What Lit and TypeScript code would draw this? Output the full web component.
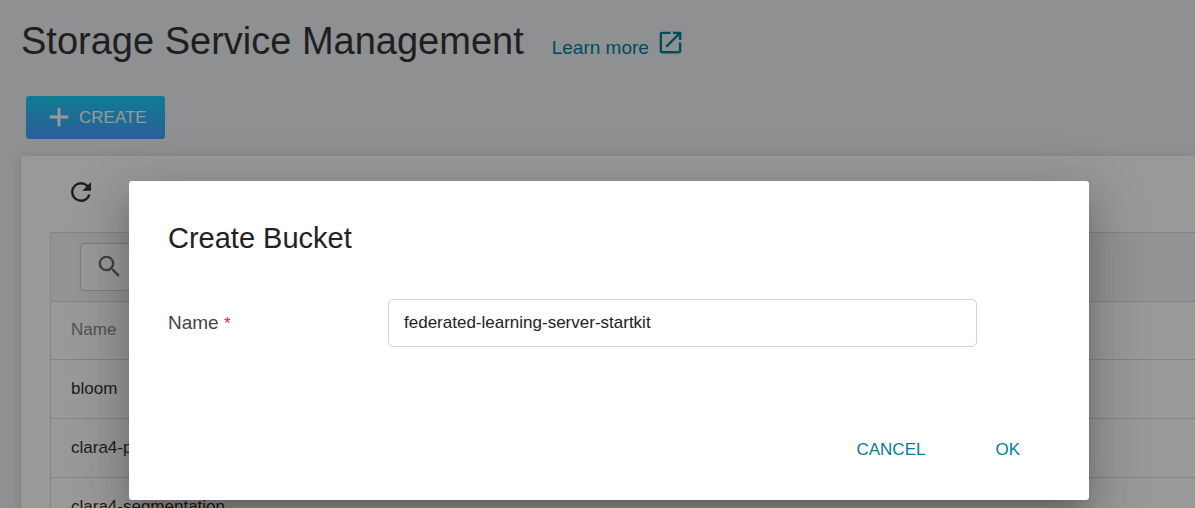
import { LitElement, html, css } from "lit";
import { customElement, property, state } from "lit/decorators.js";

@customElement("bucket-table")
class BucketTable extends LitElement {
  @property({ attribute: false }) buckets: string[] = [];

  static styles = css`
    :host {
      display: block;
    }
    .frame {
      border: 1px solid #dcdcdc;
      border-right: 0;
    }
    .filter {
      background: #f4f5f9;
      padding: 10px 29px;
      border-bottom: 1px solid #dcdcdc;
    }
    .search {
      display: flex;
      align-items: center;
      width: 360px;
      height: 48px;
      box-sizing: border-box;
      padding: 0 14px 2px;
      background: #fff;
      border: 1px solid #d0d0d0;
      border-radius: 4px;
    }
    .search svg {
      width: 29px;
      height: 29px;
      flex: none;
      fill: #6f6f6f;
    }
    .search input {
      flex: 1;
      min-width: 0;
      border: 0;
      outline: 0;
      background: none;
      font: inherit;
    }
    table {
      width: 100%;
      border-collapse: collapse;
      color: #333;
    }
    th,
    td {
      height: 59px;
      box-sizing: border-box;
      padding: 0 20px;
      text-align: left;
      font-weight: 400;
      border-bottom: 1px solid #dcdcdc;
    }
    th {
      height: 57px;
      color: #888;
    }
  `;

  render() {
    return html`
      <div class="frame">
        <div class="filter">
          <div class="search">
            <svg viewBox="0 0 24 24" aria-hidden="true">
              <path
                d="M15.5 14h-.79l-.28-.27A6.471 6.471 0 0 0 16 9.5 6.5 6.5 0 1 0 9.5 16c1.61 0 3.09-.59 4.23-1.57l.27.28v.79l5 4.99L20.49 19l-4.99-5zm-6 0C7.01 14 5 11.99 5 9.5S7.01 5 9.5 5 14 7.01 14 9.5 11.99 14 9.5 14z"
              />
            </svg>
            <input type="text" aria-label="Search buckets" />
          </div>
        </div>
        <table>
          <thead>
            <tr>
              <th scope="col">Name</th>
            </tr>
          </thead>
          <tbody>
            ${this.buckets.map((name) => html`<tr><td>${name}</td></tr>`)}
          </tbody>
        </table>
      </div>
    `;
  }
}

@customElement("create-bucket-dialog")
class CreateBucketDialog extends LitElement {
  @state() private name = "federated-learning-server-startkit";

  static styles = css`
    :host {
      position: absolute;
      inset: 0;
      display: block;
      box-sizing: border-box;
      padding: 181px 106px 0 129px;
      background: rgba(0, 0, 0, 0.4);
    }
    .dialog {
      background: #fff;
      border-radius: 3px;
      padding: 40px 39px 28px;
      color: #222;
      box-shadow:
        0 13px 18px -8px rgba(0, 0, 0, 0.2),
        0 28px 46px 4px rgba(0, 0, 0, 0.14),
        0 11px 55px 10px rgba(0, 0, 0, 0.12);
    }
    h2 {
      margin: 0 0 44px;
      font-size: 29px;
      line-height: 34px;
      font-weight: 400;
    }
    .field {
      display: grid;
      grid-template-columns: 220px 1fr;
      align-items: center;
      padding-right: 73px;
    }
    label {
      font-size: 19px;
      color: #444;
    }
    .required {
      font-size: 17px;
      color: #e0214f;
    }
    input {
      width: 100%;
      height: 48px;
      box-sizing: border-box;
      padding: 0 15px;
      border: 1px solid #d2d2d2;
      border-radius: 5px;
      outline: 0;
      background: #fff;
      color: #222;
      font: inherit;
    }
    .actions {
      display: flex;
      justify-content: flex-end;
      gap: 30px;
      margin-top: 80px;
      padding-right: 10px;
    }
    button {
      height: 45px;
      padding: 0 20px;
      border: 0;
      background: none;
      color: #007f99;
      font: inherit;
      text-transform: uppercase;
      cursor: pointer;
    }
  `;

  render() {
    return html`
      <form class="dialog" role="dialog" aria-modal="true" aria-labelledby="title" @submit=${(e: Event) => e.preventDefault()}>
        <h2 id="title">Create Bucket</h2>
        <div class="field">
          <label for="name">Name <span class="required">*</span></label>
          <input
            id="name"
            type="text"
            required
            .value=${this.name}
            @input=${(e: Event) => (this.name = (e.target as HTMLInputElement).value)}
          />
        </div>
        <div class="actions">
          <button type="button">Cancel</button>
          <button type="submit">OK</button>
        </div>
      </form>
    `;
  }
}

@customElement("app-root")
class AppRoot extends LitElement {
  private buckets = ["bloom", "clara4-pipeline", "clara4-segmentation"];

  static styles = css`
    :host {
      position: relative;
      display: block;
      height: 100vh;
      overflow: hidden;
      background: #edf0f3;
      font: 17px/20px "Liberation Sans", Arial, sans-serif;
      color: #333;
    }
    header {
      display: flex;
      align-items: baseline;
      gap: 28px;
      padding: 20px 21px 0;
    }
    h1 {
      margin: 0;
      font-size: 38px;
      line-height: 42px;
      font-weight: 400;
      color: #353535;
    }
    .learn {
      display: flex;
      align-items: flex-end;
      gap: 7px;
      font-size: 19px;
      line-height: 22px;
      color: #007f99;
      text-decoration: none;
    }
    .learn svg {
      width: 29px;
      height: 29px;
      padding-bottom: 2px;
      fill: currentColor;
    }
    .create {
      display: flex;
      align-items: center;
      gap: 6px;
      height: 43px;
      margin: 34px 0 17px 26px;
      padding: 0 18px 0 19px;
      border: 0;
      border-radius: 3px;
      background: linear-gradient(#19cff5, #4b9cff);
      color: #fff;
      font: inherit;
      text-transform: uppercase;
    }
    .create svg {
      width: 28px;
      height: 28px;
      padding-bottom: 2px;
      fill: currentColor;
    }
    .card {
      margin-left: 21px;
      padding: 17px 0 0 29px;
      background: #fff;
      border-radius: 4px 0 0 0;
      box-shadow: 0 2px 12px rgba(0, 0, 0, 0.14);
    }
    .refresh {
      display: block;
      margin: 0 0 20px 11px;
      padding: 4px 5px 5px;
      border: 0;
      background: none;
    }
    .refresh svg {
      display: block;
      width: 30px;
      height: 30px;
      fill: #333;
    }
  `;

  render() {
    return html`
      <header>
        <h1>Storage Service Management</h1>
        <a class="learn" href="#learn">
          Learn more
          <svg viewBox="0 0 24 24" aria-hidden="true">
            <path
              d="M19 19H5V5h7V3H5a2 2 0 0 0-2 2v14a2 2 0 0 0 2 2h14c1.1 0 2-.9 2-2v-7h-2v7zM14 3v2h3.59l-9.83 9.83 1.41 1.41L19 6.41V10h2V3h-7z"
            />
          </svg>
        </a>
      </header>
      <button class="create" type="button">
        <svg viewBox="0 0 24 24" aria-hidden="true">
          <path d="M20 13.2h-6.8v6.8h-2.4v-6.8H4v-2.4h6.8V4h2.4v6.8H20z" />
        </svg>
        Create
      </button>
      <section class="card">
        <button class="refresh" type="button" aria-label="Refresh">
          <svg viewBox="0 0 24 24" aria-hidden="true">
            <path
              d="M17.65 6.35A7.958 7.958 0 0 0 12 4a8 8 0 1 0 7.73 10h-2.08A5.99 5.99 0 0 1 12 18c-3.31 0-6-2.69-6-6s2.69-6 6-6c1.66 0 3.14.69 4.22 1.78L13 11h7V4l-2.35 2.35z"
            />
          </svg>
        </button>
        <bucket-table .buckets=${this.buckets}></bucket-table>
      </section>
      <create-bucket-dialog></create-bucket-dialog>
    `;
  }
}
